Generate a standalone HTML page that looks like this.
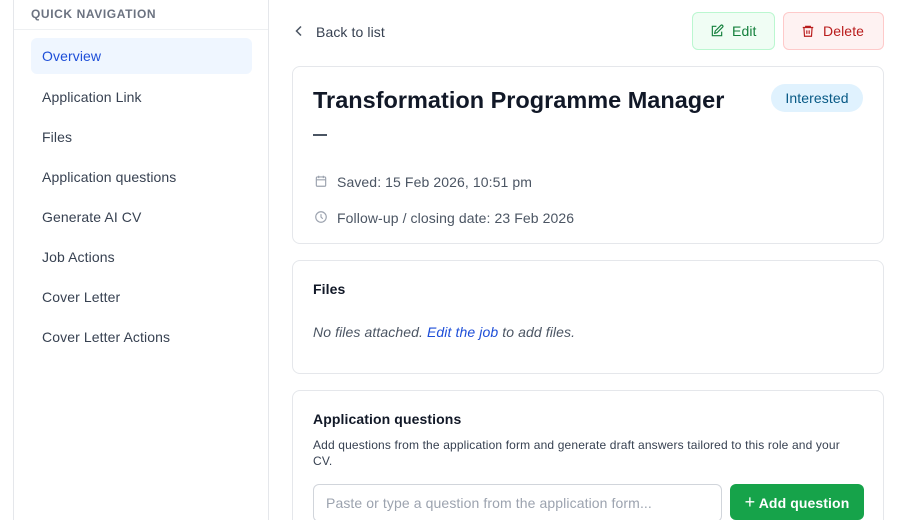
<!DOCTYPE html>
<html><head><style>
*{box-sizing:border-box;margin:0;padding:0}
html,body{width:920px;height:520px;overflow:hidden}
body{background:#fff;font-family:"Liberation Sans",Arial,sans-serif;color:#111827;position:relative;letter-spacing:.1px}
.side{position:absolute;left:13px;top:-10px;width:256px;height:540px;border-left:1px solid #e5e7eb;border-right:1px solid #e5e7eb}
.qn{position:absolute;left:17px;top:17px;font-size:12px;font-weight:bold;letter-spacing:.6px;color:#6b7280}
.hr{position:absolute;left:0;right:0;top:39px;border-top:1px solid #eef0f2}
.nav{position:absolute;left:17px;width:221px;height:36px;line-height:36px;padding-left:11px;font-size:14px;color:#374151;border-radius:6px}
.nav.act{background:#eff6ff;color:#1d4ed8;font-weight:500}
.card{position:absolute;left:292px;width:592px;border:1px solid #e5e7eb;border-radius:8px;background:#fff}
.btn{position:absolute;top:12px;height:38px;border-radius:6px;font-size:14px;line-height:36px;display:flex;align-items:center;gap:8px;padding-left:17px}
</style></head><body>
<div class="side">
<div class="qn">QUICK NAVIGATION</div><div class="hr"></div>
<div class="nav act" style="top:48px">Overview</div>
<div class="nav" style="top:89px">Application Link</div>
<div class="nav" style="top:129px">Files</div>
<div class="nav" style="top:169px">Application questions</div>
<div class="nav" style="top:209px">Generate AI CV</div>
<div class="nav" style="top:249px">Job Actions</div>
<div class="nav" style="top:289px">Cover Letter</div>
<div class="nav" style="top:329px">Cover Letter Actions</div>
</div>
<svg style="position:absolute;left:293px;top:25px" width="12" height="12" viewBox="0 0 12 12"><path d="M8 1.5L3.5 6 8 10.5" fill="none" stroke="#4b5563" stroke-width="1.5"/></svg>
<div style="position:absolute;left:316px;top:24px;font-size:14px;color:#374151">Back to list</div>
<div class="btn" style="left:692px;width:83px;background:#f0fdf4;border:1px solid #bbf7d0;color:#15803d">
<svg width="14" height="14" viewBox="0 0 24 24" fill="none" stroke="#15803d" stroke-width="2"><path d="M11 4H4v16h16v-7"/><path d="M18.5 2.5a2.1 2.1 0 0 1 3 3L12 15l-4 1 1-4z"/></svg>Edit</div>
<div class="btn" style="left:783px;width:101px;background:#fef2f2;border:1px solid #fecaca;color:#b91c1c">
<svg width="14" height="14" viewBox="0 0 24 24" fill="none" stroke="#b91c1c" stroke-width="2"><path d="M3 6h18M8 6V4h8v2M5 6l1 15h12l1-15M10 11v6M14 11v6"/></svg>Delete</div>
<div class="card" style="top:66px;height:178px">
<div style="position:absolute;left:20px;top:20px;font-size:23.5px;font-weight:bold;color:#111827;letter-spacing:0">Transformation Programme Manager</div>
<div style="position:absolute;left:20px;top:67px;width:14px;height:2px;background:#4b5563"></div>
<div style="position:absolute;left:478px;top:17px;width:92px;height:28px;border-radius:14px;background:#e0f2fe;color:#075985;font-size:14px;line-height:28px;text-align:center">Interested</div>
<svg style="position:absolute;left:21px;top:107px" width="14" height="14" viewBox="0 0 24 24" fill="none" stroke="#9ca3af" stroke-width="2"><rect x="4" y="5" width="16" height="16" rx="2"/><path d="M8 3v4M16 3v4M4 10h16"/></svg>
<div style="position:absolute;left:44px;top:107px;font-size:14px;color:#4b5563">Saved: 15 Feb 2026, 10:51 pm</div>
<svg style="position:absolute;left:21px;top:143px" width="14" height="14" viewBox="0 0 24 24" fill="none" stroke="#9ca3af" stroke-width="2"><circle cx="12" cy="12" r="9"/><path d="M12 7v5l3 3"/></svg>
<div style="position:absolute;left:44px;top:143px;font-size:14px;color:#4b5563">Follow-up / closing date: 23 Feb 2026</div>
</div>
<div class="card" style="top:260px;height:114px">
<div style="position:absolute;left:20px;top:20px;font-size:14px;font-weight:bold">Files</div>
<div style="position:absolute;left:20px;top:63px;font-size:14px;font-style:italic;color:#4b5563">No files attached. <span style="color:#1d4ed8">Edit the job</span> to add files.</div>
</div>
<div class="card" style="top:390px;height:150px">
<div style="position:absolute;left:20px;top:20px;font-size:14px;font-weight:bold">Application questions</div>
<div style="position:absolute;left:20px;top:46px;width:540px;font-size:12px;line-height:16px;color:#374151;letter-spacing:.15px">Add questions from the application form and generate draft answers tailored to this role and your CV.</div>
<div style="position:absolute;left:20px;top:93px;width:409px;height:38px;border:1px solid #d1d5db;border-radius:6px;font-size:14px;color:#9ca3af;line-height:36px;padding-left:12px">Paste or type a question from the application form...</div>
<div style="position:absolute;left:437px;top:93px;width:134px;height:36px;background:#16a34a;border-radius:6px;color:#fff;font-size:14px;font-weight:bold;line-height:36px;text-align:center"><span style="font-size:18px;font-weight:normal">+</span> Add question</div>
</div>
</body></html>
